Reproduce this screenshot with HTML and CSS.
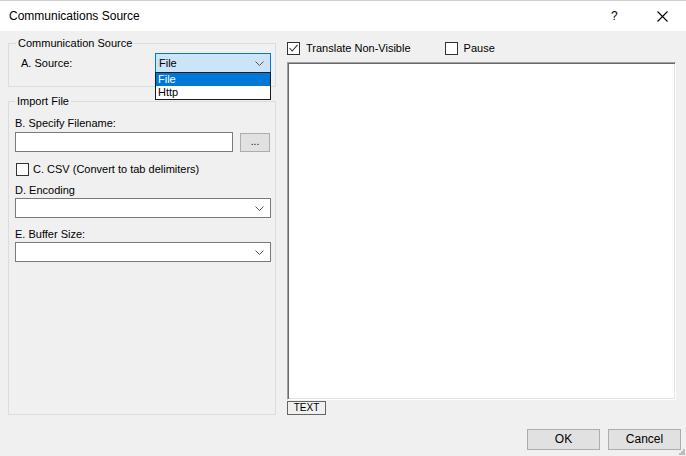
FILE: index.html
```html
<!DOCTYPE html>
<html>
<head>
<meta charset="utf-8">
<link rel="stylesheet" href="styles.css">
</head>
<body>
<div class="window">
  <div class="titlebar">
    <span class="title">Communications Source</span>
    <span class="help">?</span>
    <span class="close"><svg width="11" height="11" viewBox="0 0 11 11"><path d="M0.5 0.5 L10.5 10.5 M10.5 0.5 L0.5 10.5" stroke="#000" stroke-width="1.1" fill="none"/></svg></span>
  </div>
  <div class="main">
    <div class="left">
      <fieldset class="group group-source">
        <legend>Communication Source</legend>
        <div class="source-row">
          <span class="lbl-source">A. Source:</span>
          <div class="combo-wrap">
            <div class="combo combo-active">
              <span class="combo-text">File</span>
              <svg class="chev" width="9" height="5" viewBox="0 0 9 5"><path d="M0.5 0.5 L4.5 4.5 L8.5 0.5" stroke="#555" fill="none"/></svg>
            </div>
            <div class="dropdown">
              <div class="opt opt-sel">File</div>
              <div class="opt">Http</div>
            </div>
          </div>
        </div>
      </fieldset>
      <fieldset class="group group-import">
        <legend>Import File</legend>
        <div class="lbl lbl-b">B. Specify Filename:</div>
        <div class="file-row">
          <div class="textbox"></div>
          <div class="btn-browse">...</div>
        </div>
        <div class="check-row csv-row">
          <span class="checkbox"></span>
          <span class="check-text">C. CSV (Convert to tab delimiters)</span>
        </div>
        <div class="lbl lbl-d">D. Encoding</div>
        <div class="combo combo-wide">
          <span class="combo-text"></span>
          <svg class="chev" width="9" height="5" viewBox="0 0 9 5"><path d="M0.5 0.5 L4.5 4.5 L8.5 0.5" stroke="#555" fill="none"/></svg>
        </div>
        <div class="lbl lbl-e">E. Buffer Size:</div>
        <div class="combo combo-wide">
          <span class="combo-text"></span>
          <svg class="chev" width="9" height="5" viewBox="0 0 9 5"><path d="M0.5 0.5 L4.5 4.5 L8.5 0.5" stroke="#555" fill="none"/></svg>
        </div>
      </fieldset>
    </div>
    <div class="right">
      <div class="opts-row">
        <div class="check-row">
          <span class="checkbox"><svg width="11" height="11" viewBox="0 0 11 11"><path d="M1.5 5 L4.2 8 L9.5 1.8" stroke="#333" stroke-width="1.1" fill="none"/></svg></span>
          <span class="check-text">Translate Non-Visible</span>
        </div>
        <div class="check-row pause">
          <span class="checkbox"></span>
          <span class="check-text">Pause</span>
        </div>
      </div>
      <div class="textarea"></div>
      <div class="text-btn">TEXT</div>
    </div>
  </div>
  <div class="footer">
    <div class="btn">OK</div>
    <div class="btn">Cancel</div>
  </div>
  <svg class="grip" width="6" height="6" viewBox="0 0 6 6"><rect x="4" y="0" width="2" height="2" fill="#bdbdbd"/><rect x="2" y="2" width="2" height="2" fill="#bdbdbd"/><rect x="4" y="2" width="2" height="2" fill="#bdbdbd"/><rect x="0" y="4" width="2" height="2" fill="#bdbdbd"/><rect x="2" y="4" width="2" height="2" fill="#bdbdbd"/><rect x="4" y="4" width="2" height="2" fill="#bdbdbd"/></svg>
</div>
</body>
</html>
```
FILE: styles.css
```css
* { box-sizing: border-box; }
html, body { margin: 0; padding: 0; }
body {
  font-family: "Liberation Sans", Arial, sans-serif;
  font-size: 11px;
  color: #000;
  background: #f0f0f0;
}
.window {
  position: relative;
  width: 686px;
  height: 456px;
  background: #f0f0f0;
  display: flex;
  flex-direction: column;
  overflow: hidden;
}
.titlebar {
  height: 31px;
  background: #fff;
  border-top: 1px solid #cfcfcf;
  display: flex;
  align-items: center;
  padding-left: 9px;
  flex: none;
}
.title {
  font-size: 12px;
  flex: 1;
}
.help {
  font-size: 12px;
  width: 10px;
  margin-right: 36px;
}
.close {
  width: 11px;
  height: 11px;
  margin-right: 18px;
  display: flex;
}
.main {
  display: flex;
  height: 384px;
  flex: none;
}
.left {
  width: 268px;
  margin-left: 8px;
  display: flex;
  flex-direction: column;
}
.group {
  margin: 0;
  padding: 0;
  border: 1px solid #dcdcdc;
  min-width: 0;
}
.group legend {
  padding: 0 2px;
  line-height: 13px;
}
.group-source {
  margin-top: 6px;
  padding: 3px 4px 13px 12px;
}
.group-source legend { margin-left: -5px; }
.source-row {
  display: flex;
  align-items: center;
  justify-content: space-between;
  height: 20px;
}
.combo-wrap {
  position: relative;
  width: 116px;
  height: 20px;
}
.combo {
  height: 20px;
  border: 1px solid #7a7a7a;
  background: #fff;
  display: flex;
  align-items: center;
  padding-left: 3px;
  padding-right: 6px;
}
.combo-text { flex: 1; }
.combo-active {
  border-color: #0078d7;
  background: #cce4f7;
}
.dropdown {
  position: absolute;
  left: 0;
  top: 19px;
  width: 116px;
  border: 1px solid #1a1a1a;
  background: #fff;
  z-index: 2;
}
.opt {
  height: 13px;
  line-height: 13px;
  padding-left: 2px;
}
.opt-sel {
  background: #0078d7;
  color: #fff;
}
.group-import {
  margin-top: 8px;
  height: 320px;
  padding: 0 4px 0 6px;
}
.group-import legend { margin-left: 0; }
.lbl {
  line-height: 13px;
}
.lbl-b { margin-top: 9px; }
.file-row {
  display: flex;
  justify-content: space-between;
  margin-top: 2px;
  height: 20px;
}
.textbox {
  width: 218px;
  height: 20px;
  border: 1px solid #7a7a7a;
  background: #fff;
}
.btn-browse {
  width: 30px;
  height: 19px;
  margin-top: 1px;
  margin-right: 1px;
  border: 1px solid #adadad;
  background: #e1e1e1;
  text-align: center;
  line-height: 15px;
  font-size: 10px;
}
.check-row {
  display: flex;
  align-items: center;
  height: 13px;
}
.csv-row {
  margin-top: 11px;
  padding-left: 1px;
}
.checkbox {
  width: 13px;
  height: 13px;
  border: 1px solid #333;
  background: #fff;
  display: flex;
  align-items: center;
  justify-content: center;
  flex: none;
}
.check-text {
  margin-left: 4px;
  line-height: 13px;
}
.lbl-d { margin-top: 8px; }
.combo-wide {
  width: 256px;
  margin-top: 1px;
}
.lbl-e { margin-top: 10px; }
.right {
  margin-left: 11px;
  width: 389px;
  padding-top: 11px;
  display: flex;
  flex-direction: column;
}
.opts-row {
  display: flex;
  height: 13px;
}
.opts-row .check-text { margin-left: 6px; }
.pause { margin-left: 34px; }
.textarea {
  margin-top: 7px;
  height: 338px;
  background: #fff;
  border: 1px solid;
  border-color: #a0a0a0 #ffffff #ffffff #a0a0a0;
  box-shadow: inset 1px 1px 0 #696969, inset -1px -1px 0 #e3e3e3;
}
.text-btn {
  margin-top: 1px;
  width: 39px;
  height: 14px;
  border: 1px solid #646464;
  text-align: center;
  font-size: 10px;
  line-height: 12px;
}
.footer {
  display: flex;
  justify-content: flex-end;
  gap: 8px;
  padding: 14px 5px 0 0;
}
.btn {
  width: 73px;
  height: 21px;
  border: 1px solid #adadad;
  background: #e1e1e1;
  text-align: center;
  line-height: 19px;
  font-size: 12px;
}
.grip {
  position: absolute;
  right: 1px;
  bottom: 1px;
}
```
